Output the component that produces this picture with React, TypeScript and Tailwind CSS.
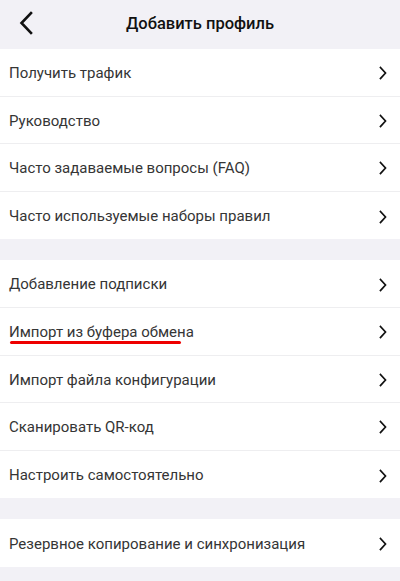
import React from "react";

const Chevron = () => (
  <svg width="10" height="14" viewBox="0 0 10 14" fill="none" className="shrink-0">
    <path d="M2.5 1.5 L7.5 7 L2.5 12.5" stroke="#111" strokeWidth="1.7" strokeLinecap="square" />
  </svg>
);

type Item = { label: string; underline?: boolean };

const Row = ({ item, last }: { item: Item; last: boolean }) => (
  <div className={`flex h-[47.6px] items-center justify-between bg-white pl-[9px] pr-[12px] pt-[2px] ${last ? "" : "border-b border-[#eeeef0]"}`}>
    <span className="relative text-[15px] text-[#353535]">
      {item.label}
      {item.underline && (
        <span className="absolute left-[1px] top-[20px] h-[2.5px] w-[171px] rounded-full bg-[#ee0000]" />
      )}
    </span>
    <Chevron />
  </div>
);

const Group = ({ items }: { items: Item[] }) => (
  <div className="flex flex-col">
    {items.map((it, i) => (
      <Row key={it.label} item={it} last={i === items.length - 1} />
    ))}
  </div>
);

export default function App() {
  return (
    <div className="flex min-h-[581px] w-[400px] flex-col bg-[#f2f1f6]" style={{ fontFamily: "Roboto, 'Noto Sans', sans-serif" }}>
      <div className="relative flex h-[49px] items-center justify-center">
        <svg width="16" height="24" viewBox="0 0 16 24" fill="none" className="absolute left-[18px] top-[11px]">
          <path d="M13 2 L3.5 12 L13 22" stroke="#111" strokeWidth="2.6" strokeLinecap="square" />
        </svg>
        <span className="text-[16.5px] font-medium text-[#111]">Добавить профиль</span>
      </div>
      <Group
        items={[
          { label: "Получить трафик" },
          { label: "Руководство" },
          { label: "Часто задаваемые вопросы (FAQ)" },
          { label: "Часто используемые наборы правил" },
        ]}
      />
      <div className="h-[21px]" />
      <Group
        items={[
          { label: "Добавление подписки" },
          { label: "Импорт из буфера обмена", underline: true },
          { label: "Импорт файла конфигурации" },
          { label: "Сканировать QR-код" },
          { label: "Настроить самостоятельно" },
        ]}
      />
      <div className="h-[21px]" />
      <Group items={[{ label: "Резервное копирование и синхронизация" }]} />
    </div>
  );
}
